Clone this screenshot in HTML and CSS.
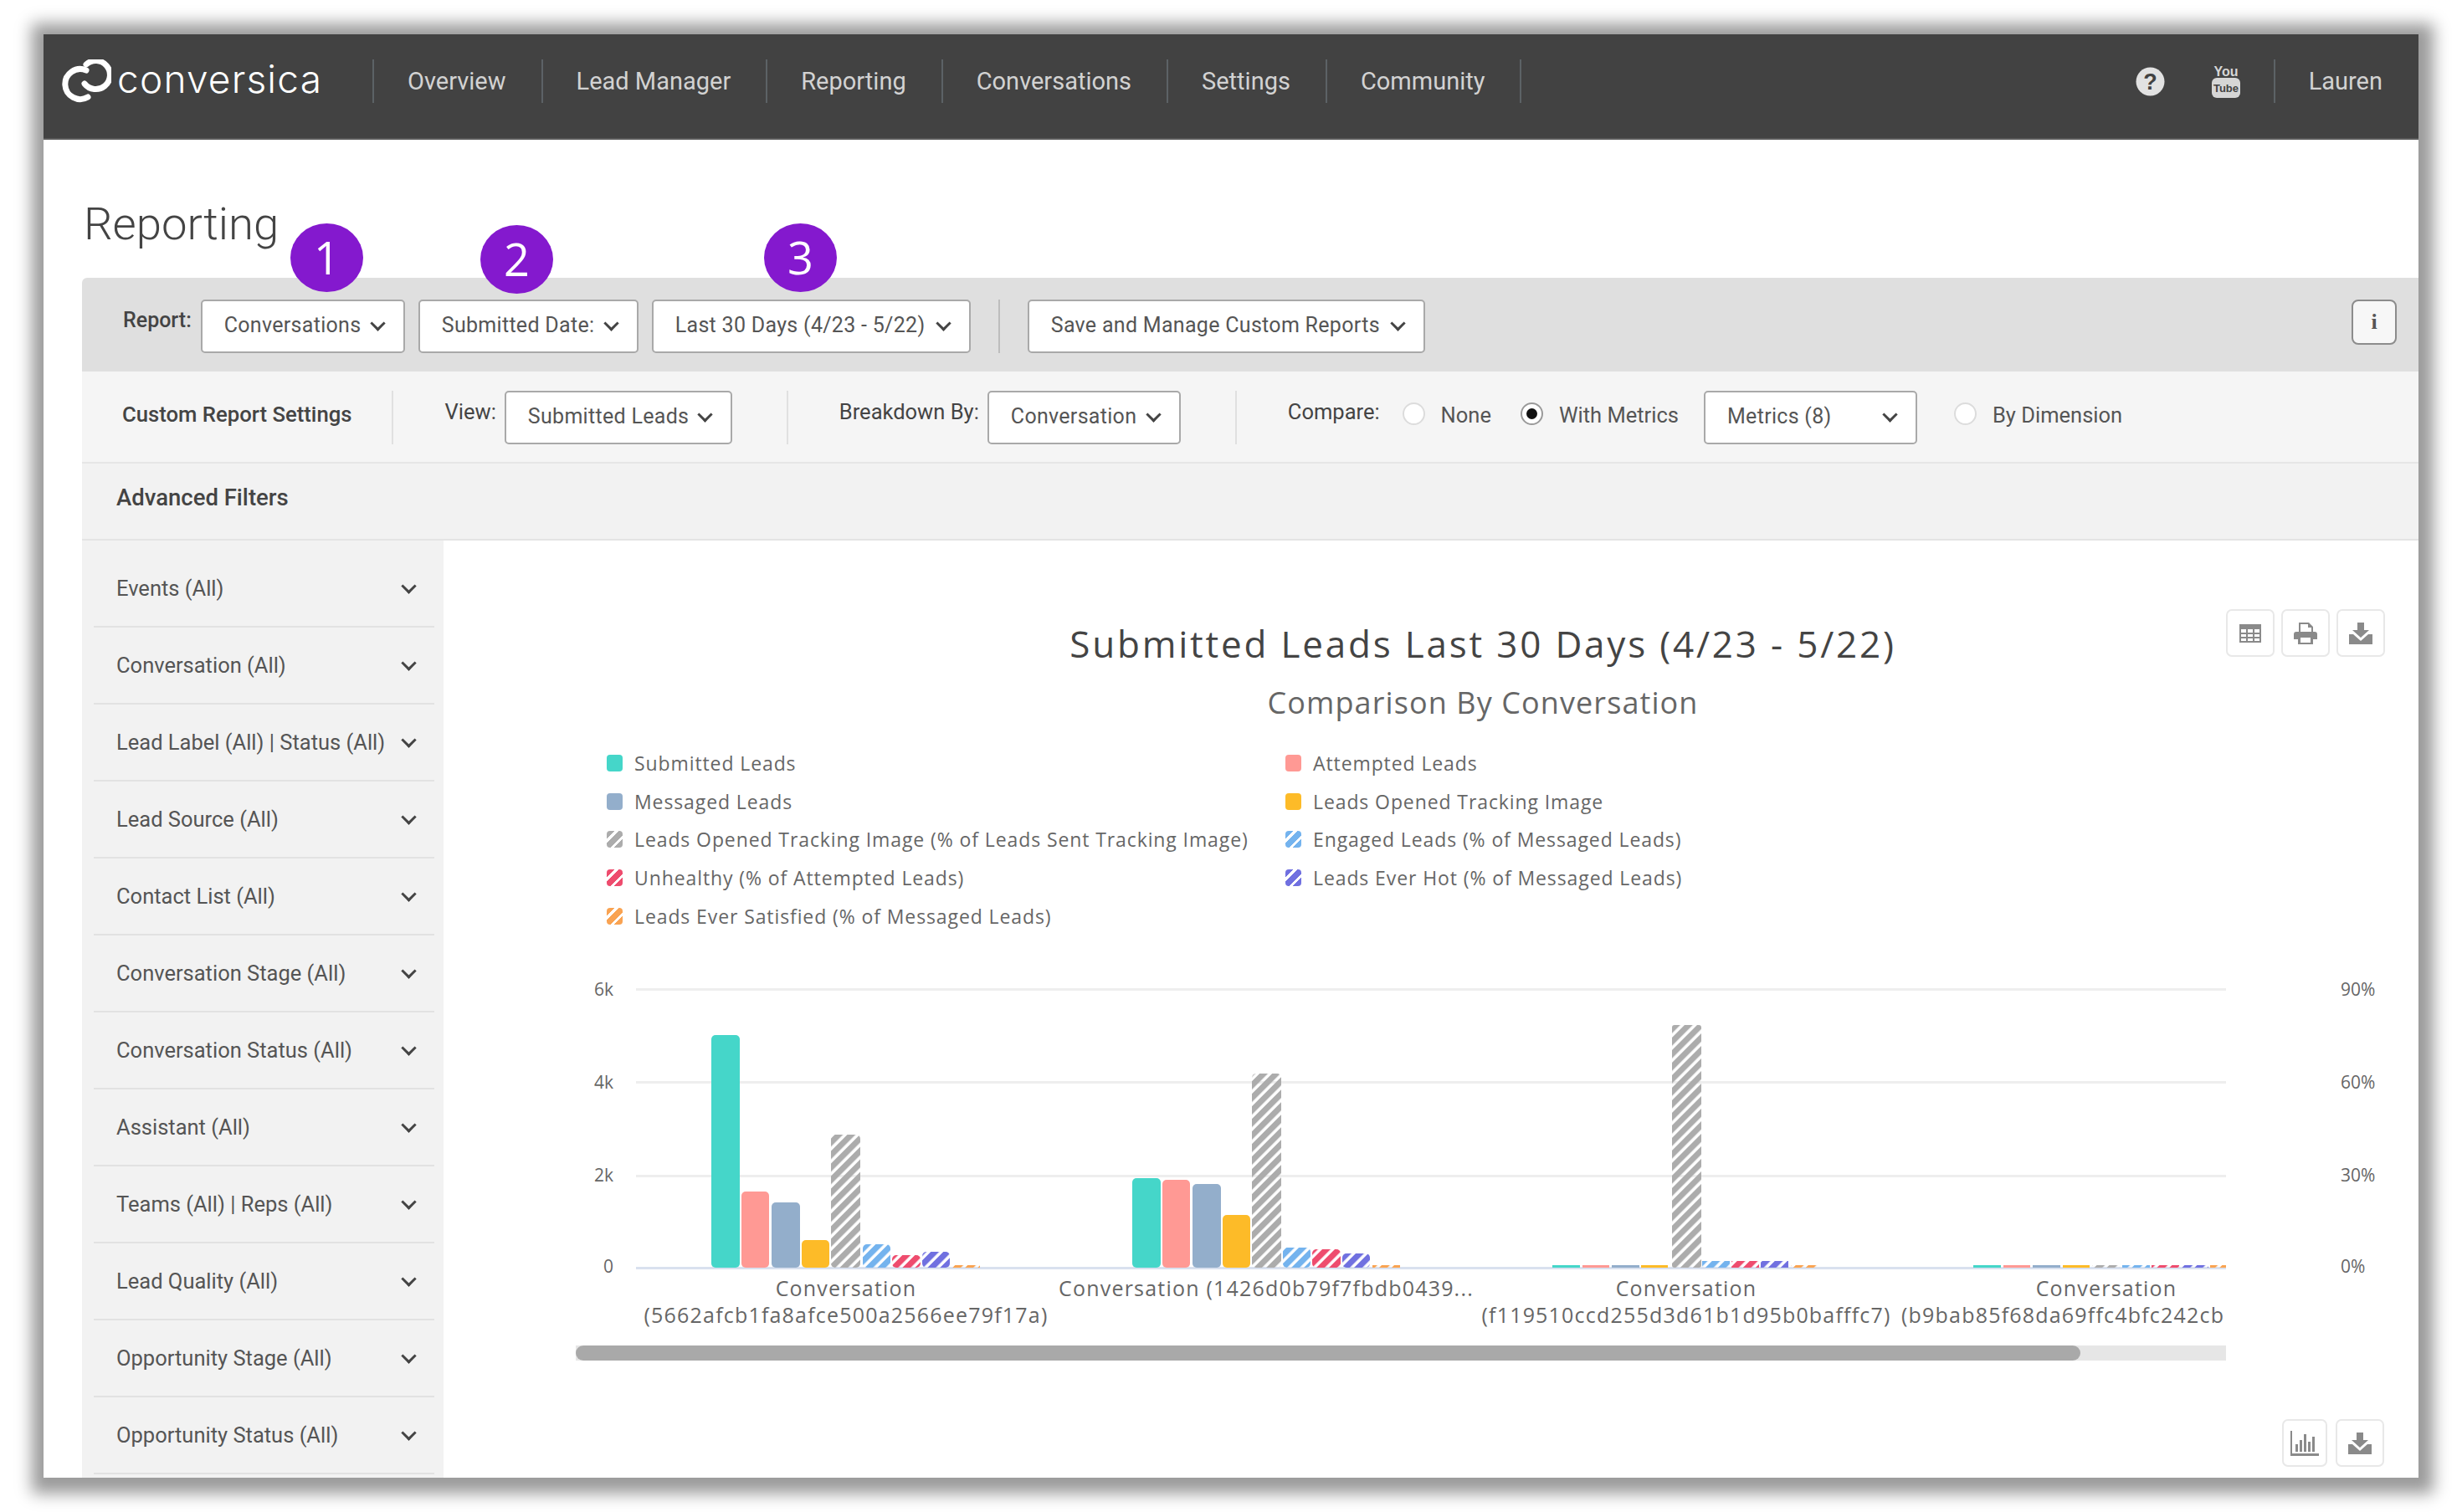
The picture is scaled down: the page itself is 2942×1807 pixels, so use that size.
FILE: index.html
```html
<!DOCTYPE html>
<html lang="en">
<head>
    <meta charset="UTF-8">
    <title>Conversica - Reporting</title>
    <link rel="stylesheet" href="styles.css">
</head>
<body>
<div class="frame">
    <nav class="topnav">
        <a class="logo">
            <svg width="60" height="52" viewBox="0 0 60 52" fill="none" stroke="#fff" stroke-width="7" stroke-linecap="round">
                <path d="M30 13A18 18 0 1 0 32 45"/>
                <path d="M30 6A17 17 0 1 1 28 29"/>
            </svg>
            <span class="logo-word">conversica</span>
        </a>
        <a class="nav-item">Overview</a>
        <a class="nav-item">Lead Manager</a>
        <a class="nav-item">Reporting</a>
        <a class="nav-item">Conversations</a>
        <a class="nav-item">Settings</a>
        <a class="nav-item nav-last">Community</a>
        <div class="nav-right">
            <svg class="icon-help" width="35" height="35" viewBox="0 0 35 35">
                <circle cx="17.5" cy="17.5" r="17" fill="#e2e2e2"/>
                <text x="17.5" y="27" text-anchor="middle">?</text>
            </svg>
            <svg class="icon-yt" width="34" height="40" viewBox="0 0 34 40">
                <text class="yt-you" x="17" y="14" text-anchor="middle">You</text>
                <rect y="16" width="34" height="24" rx="6" fill="#d6d6d6"/>
                <text class="yt-tube" x="17" y="33" text-anchor="middle">Tube</text>
            </svg>
            <a class="nav-user">Lauren</a>
        </div>
    </nav>

    <div class="content">
        <h1 class="page-title">Reporting</h1>

        <div class="toolbar">
            <span class="badge badge-1">1</span>
            <span class="badge badge-2">2</span>
            <span class="badge badge-3">3</span>
            <span class="label label-report">Report:</span>
            <button class="select sel-report">Conversations <i class="chev"></i></button>
            <button class="select sel-date">Submitted Date: <i class="chev"></i></button>
            <button class="select sel-range">Last 30 Days (4/23 - 5/22) <i class="chev"></i></button>
            <span class="divider divider-dark"></span>
            <button class="select sel-save">Save and Manage Custom Reports <i class="chev"></i></button>
            <button class="info-btn">i</button>
        </div>

        <div class="settings">
            <span class="label label-strong">Custom Report Settings</span>
            <span class="divider"></span>
            <span class="label label-view">View:</span>
            <button class="select sel-view">Submitted Leads <i class="chev"></i></button>
            <span class="divider"></span>
            <span class="label label-view">Breakdown By:</span>
            <button class="select sel-break">Conversation <i class="chev"></i></button>
            <span class="divider"></span>
            <span class="label">Compare:</span>
            <span class="radio"></span><span class="radio-text">None</span>
            <span class="radio radio-on"></span><span class="radio-text">With Metrics</span>
            <button class="select sel-metrics">Metrics (8) <i class="chev"></i></button>
            <span class="radio"></span><span class="radio-text">By Dimension</span>
        </div>

        <div class="adv-head">Advanced Filters</div>

        <div class="workspace">
            <aside class="filters">
                <div class="filter">Events (All)<i class="chev"></i></div>
                <div class="filter">Conversation (All)<i class="chev"></i></div>
                <div class="filter">Lead Label (All) | Status (All)<i class="chev"></i></div>
                <div class="filter">Lead Source (All)<i class="chev"></i></div>
                <div class="filter">Contact List (All)<i class="chev"></i></div>
                <div class="filter">Conversation Stage (All)<i class="chev"></i></div>
                <div class="filter">Conversation Status (All)<i class="chev"></i></div>
                <div class="filter">Assistant (All)<i class="chev"></i></div>
                <div class="filter">Teams (All) | Reps (All)<i class="chev"></i></div>
                <div class="filter">Lead Quality (All)<i class="chev"></i></div>
                <div class="filter">Opportunity Stage (All)<i class="chev"></i></div>
                <div class="filter">Opportunity Status (All)<i class="chev"></i></div>
            </aside>

            <section class="chart-panel">
                <div class="tools tools-top">
                    <button class="tool">
                        <svg width="26" height="24" viewBox="0 0 26 24" fill="#8a8a8a"><path d="M0 1h26v22H0zM2 7v4h6V7zm8 0v4h6V7zm8 0v4h6V7zM2 13v3h6v-3zm8 0v3h6v-3zm8 0v3h6v-3zM2 18v3h6v-3zm8 0v3h6v-3zm8 0v3h6v-3z" fill-rule="evenodd"/></svg>
                    </button>
                    <button class="tool">
                        <svg width="28" height="26" viewBox="0 0 28 26" fill="#8a8a8a"><path d="M6 0h12l5 5v6h2a3 3 0 0 1 3 3v6h-5v6H5v-6H0v-6a3 3 0 0 1 3-3h3zm2 2v9h13V6h-4V2zM8 18v6h12v-6z" fill-rule="evenodd"/></svg>
                    </button>
                    <button class="tool">
                        <svg width="28" height="26" viewBox="0 0 28 26" fill="#8a8a8a"><path d="M10 0h8v9h6l-10 9L4 9h6z"/><path d="M0 14h5l9 8 9-8h5v12H0z"/></svg>
                    </button>
                </div>

                <h2 class="chart-title">Submitted Leads Last 30 Days (4/23 - 5/22)</h2>
                <h3 class="chart-sub">Comparison By Conversation</h3>

                <div class="legend">
                    <div class="legend-item"><i class="mark m-teal"></i>Submitted Leads</div>
                    <div class="legend-item"><i class="mark m-salmon"></i>Attempted Leads</div>
                    <div class="legend-item"><i class="mark m-blue"></i>Messaged Leads</div>
                    <div class="legend-item"><i class="mark m-yellow"></i>Leads Opened Tracking Image</div>
                    <div class="legend-item"><i class="mark m-grey"></i>Leads Opened Tracking Image (% of Leads Sent Tracking Image)</div>
                    <div class="legend-item"><i class="mark m-sky"></i>Engaged Leads (% of Messaged Leads)</div>
                    <div class="legend-item"><i class="mark m-red"></i>Unhealthy (% of Attempted Leads)</div>
                    <div class="legend-item"><i class="mark m-violet"></i>Leads Ever Hot (% of Messaged Leads)</div>
                    <div class="legend-item"><i class="mark m-orange"></i>Leads Ever Satisfied (% of Messaged Leads)</div>
                </div>

                <svg class="plot" width="2230" height="480" viewBox="660 1160 2230 480">
                    <defs>
                        <pattern id="p-grey" width="10.6" height="10.6" patternUnits="userSpaceOnUse" patternTransform="rotate(45)"><rect width="7" height="10.6" fill="#acacac"/></pattern>
                        <pattern id="p-sky" width="10.6" height="10.6" patternUnits="userSpaceOnUse" patternTransform="rotate(45)"><rect width="7" height="10.6" fill="#74b3ee"/></pattern>
                        <pattern id="p-red" width="10.6" height="10.6" patternUnits="userSpaceOnUse" patternTransform="rotate(45)"><rect width="7" height="10.6" fill="#ee4c6e"/></pattern>
                        <pattern id="p-violet" width="10.6" height="10.6" patternUnits="userSpaceOnUse" patternTransform="rotate(45)"><rect width="7" height="10.6" fill="#7070e0"/></pattern>
                        <pattern id="p-orange" width="10.6" height="10.6" patternUnits="userSpaceOnUse" patternTransform="rotate(45)"><rect width="7" height="10.6" fill="#f9a352"/></pattern>
                    </defs>

                    <rect class="grid" x="760" y="1181" width="1900" height="3"/>
                    <rect class="grid" x="760" y="1292" width="1900" height="3"/>
                    <rect class="grid" x="760" y="1404" width="1900" height="3"/>
                    <rect class="base" x="760" y="1514" width="1900" height="3"/>

                    <text class="axis" x="733" y="1190" text-anchor="end">6k</text>
                    <text class="axis" x="733" y="1301" text-anchor="end">4k</text>
                    <text class="axis" x="733" y="1412" text-anchor="end">2k</text>
                    <text class="axis" x="733" y="1521" text-anchor="end">0</text>
                    <text class="axis" x="2797" y="1190">90%</text>
                    <text class="axis" x="2797" y="1301">60%</text>
                    <text class="axis" x="2797" y="1412">30%</text>
                    <text class="axis" x="2797" y="1521">0%</text>

                    <!-- first conversation -->
                    <rect x="850" y="1237" width="34" height="278" rx="5" fill="#45d6c9"/>
                    <rect x="886" y="1424" width="33" height="91" rx="5" fill="#ff9994"/>
                    <rect x="922" y="1437" width="34" height="78" rx="5" fill="#93aecb"/>
                    <rect x="958" y="1482" width="33" height="33" rx="5" fill="#fdbb28"/>
                    <rect x="993" y="1356" width="35" height="159" rx="5" fill="url(#p-grey)"/>
                    <rect x="1031" y="1487" width="33" height="28" rx="5" fill="url(#p-sky)"/>
                    <rect x="1066" y="1500" width="34" height="15" rx="5" fill="url(#p-red)"/>
                    <rect x="1102" y="1496" width="33" height="19" rx="5" fill="url(#p-violet)"/>
                    <rect x="1138" y="1512" width="33" height="3" fill="url(#p-orange)"/>

                    <!-- second conversation -->
                    <rect x="1353" y="1408" width="34" height="107" rx="5" fill="#45d6c9"/>
                    <rect x="1389" y="1410" width="33" height="105" rx="5" fill="#ff9994"/>
                    <rect x="1425" y="1415" width="34" height="100" rx="5" fill="#93aecb"/>
                    <rect x="1461" y="1452" width="33" height="63" rx="5" fill="#fdbb28"/>
                    <rect x="1496" y="1283" width="35" height="232" rx="5" fill="url(#p-grey)"/>
                    <rect x="1533" y="1491" width="33" height="24" rx="5" fill="url(#p-sky)"/>
                    <rect x="1568" y="1493" width="34" height="22" rx="5" fill="url(#p-red)"/>
                    <rect x="1604" y="1498" width="33" height="17" rx="5" fill="url(#p-violet)"/>
                    <rect x="1640" y="1512" width="33" height="3" fill="url(#p-orange)"/>

                    <!-- third conversation -->
                    <rect x="1855" y="1512" width="33" height="3" fill="#45d6c9"/>
                    <rect x="1891" y="1512" width="32" height="3" fill="#ff9994"/>
                    <rect x="1926" y="1512" width="33" height="3" fill="#93aecb"/>
                    <rect x="1961" y="1512" width="32" height="3" fill="#fdbb28"/>
                    <rect x="1998" y="1225" width="35" height="290" rx="3" fill="url(#p-grey)"/>
                    <rect x="2034" y="1507" width="33" height="8" fill="url(#p-sky)"/>
                    <rect x="2069" y="1507" width="33" height="8" fill="url(#p-red)"/>
                    <rect x="2104" y="1507" width="33" height="8" fill="url(#p-violet)"/>
                    <rect x="2140" y="1512" width="33" height="3" fill="url(#p-orange)"/>

                    <!-- fourth conversation -->
                    <rect x="2358" y="1512" width="33" height="3" fill="#45d6c9"/>
                    <rect x="2394" y="1512" width="32" height="3" fill="#ff9994"/>
                    <rect x="2429" y="1512" width="33" height="3" fill="#93aecb"/>
                    <rect x="2465" y="1512" width="32" height="3" fill="#fdbb28"/>
                    <rect x="2500" y="1512" width="33" height="3" fill="url(#p-grey)"/>
                    <rect x="2536" y="1512" width="33" height="3" fill="url(#p-sky)"/>
                    <rect x="2571" y="1512" width="33" height="3" fill="url(#p-red)"/>
                    <rect x="2606" y="1512" width="33" height="3" fill="url(#p-violet)"/>
                    <rect x="2641" y="1512" width="19" height="3" fill="url(#p-orange)"/>

                    <text class="cat" x="1011" y="1549" text-anchor="middle">Conversation</text>
                    <text class="cat" x="1011" y="1581" text-anchor="middle">(5662afcb1fa8afce500a2566ee79f17a)</text>
                    <text class="cat" x="1513" y="1549" text-anchor="middle">Conversation (1426d0b79f7fbdb0439...</text>
                    <text class="cat" x="2015" y="1549" text-anchor="middle">Conversation</text>
                    <text class="cat" x="2015" y="1581" text-anchor="middle">(f119510ccd255d3d61b1d95b0bafffc7)</text>
                    <text class="cat" x="2517" y="1549" text-anchor="middle">Conversation</text>
                    <text class="cat" x="2272" y="1581">(b9bab85f68da69ffc4bfc242cb</text>

                    <rect class="scroll-track" x="688" y="1608" width="1972" height="18"/>
                    <rect class="scroll-thumb" x="688" y="1608" width="1798" height="18" rx="9"/>
                </svg>

                <div class="tools tools-bottom">
                    <button class="tool tool-narrow">
                        <svg width="34" height="30" viewBox="0 0 34 30" fill="#8a8a8a"><path d="M0 0h2v27h32v3H0zM6 16h3v9H6zM11 11h3v14h-3zM16 4h3v21h-3zM21 13h3v12h-3zM26 7h3v18h-3z"/></svg>
                    </button>
                    <button class="tool">
                        <svg width="28" height="26" viewBox="0 0 28 26" fill="#8a8a8a"><path d="M10 0h8v9h6l-10 9L4 9h6z"/><path d="M0 14h5l9 8 9-8h5v12H0z"/></svg>
                    </button>
                </div>
            </section>
        </div>
    </div>
</div>
</body>
</html>
```

FILE: styles.css
```css
html, body {
    margin: 0;
    height: 100%;
    background: #fff;
    overflow: hidden;
}
body {
    padding: 41px 52px 0;
    box-sizing: border-box;
    font-family: Roboto, "Liberation Sans", sans-serif;
    color: #555;
}
.frame {
    height: 1725px;
    background: #fff;
    overflow: hidden;
    box-shadow: 2px 3px 18px 16px #9b9b9b;
}

/* top bar */
.topnav {
    height: 126px;
    box-sizing: border-box;
    padding: 30px 43px 0 21px;
    background: #424242;
    border-bottom: 2px solid #5a5a5a;
    display: flex;
    align-items: flex-start;
}
.logo {
    width: 372px;
    height: 52px;
    display: flex;
    align-items: center;
    gap: 7px;
}
.logo-word {
    font-family: Inter, sans-serif;
    font-weight: 300;
    font-size: 46px;
    letter-spacing: 1.2px;
    color: #fff;
    line-height: 52px;
    margin-top: -6px;
}
.nav-item {
    height: 52px;
    line-height: 52px;
    padding: 0 42px 0 40px;
    border-left: 2px solid #5c6266;
    font-size: 29px;
    color: #d2d2d2;
}
.nav-last {
    border-right: 2px solid #5c6266;
}
.nav-right {
    margin-left: auto;
    height: 52px;
    display: flex;
    align-items: center;
}
.icon-help text {
    font-family: "Liberation Sans", sans-serif;
    font-weight: bold;
    font-size: 27px;
    fill: #424242;
}
.icon-help {
    margin-right: 56px;
}
.icon-yt {
    margin-right: 40px;
}
.yt-you {
    font-family: "Liberation Sans", sans-serif;
    font-weight: bold;
    font-size: 16px;
    fill: #d6d6d6;
}
.yt-tube {
    font-family: "Liberation Sans", sans-serif;
    font-weight: bold;
    font-size: 13px;
    fill: #424242;
}
.nav-user {
    height: 52px;
    line-height: 52px;
    padding-left: 40px;
    border-left: 2px solid #5c6266;
    font-size: 29px;
    color: #d2d2d2;
}

.content {
    padding-left: 46px;
}
.page-title {
    margin: 0;
    height: 165px;
    box-sizing: border-box;
    padding: 68px 0 0 2px;
    font-size: 54.5px;
    line-height: 64px;
    font-weight: 300;
    color: #444;
}

/* report selectors */
.toolbar {
    position: relative;
    height: 112px;
    box-sizing: border-box;
    padding: 26px 26px 0 49px;
    background: #dfdfdf;
    border-top-left-radius: 6px;
    display: flex;
    align-items: flex-start;
}
.badge {
    position: absolute;
    top: -65px;
    width: 87px;
    height: 82px;
    border-radius: 50%;
    background: #8419ce;
    color: #fff;
    font-family: "Open Sans", sans-serif;
    font-size: 54px;
    line-height: 80px;
    text-align: center;
}
.badge-1 { left: 249px; }
.badge-2 { left: 476px; top: -63px; }
.badge-3 { left: 815px; }

.label {
    font-size: 25.5px;
    line-height: 50px;
    color: #444;
    white-space: nowrap;
}
.label-report {
    font-size: 25px;
    font-weight: 500;
    margin-right: 11px;
}
.label-strong {
    font-size: 25.7px;
    font-weight: 500;
    line-height: 56px;
}
.label-view {
    margin-right: 10px;
}
.select {
    height: 64px;
    padding: 0 21px 3px 26px;
    background: #fff;
    border: 2px solid #a9a9a9;
    border-radius: 5px;
    font-family: Roboto, "Liberation Sans", sans-serif;
    font-size: 25px;
    letter-spacing: 0.3px;
    color: #555;
    white-space: nowrap;
    display: flex;
    align-items: center;
    justify-content: space-between;
    flex: none;
}
.sel-report { width: 244px; margin-right: 16px; }
.sel-date { width: 263px; margin-right: 16px; }
.sel-range { width: 381px; }
.sel-save { width: 475px; }
.sel-view { width: 272px; }
.sel-break { width: 231px; }
.sel-metrics {
    width: 255px;
    margin-left: 30px;
    margin-right: 44px;
}
.chev {
    flex: none;
    width: 10px;
    height: 10px;
    margin: -5px 3px 0 3px;
    border-right: 3px solid #444;
    border-bottom: 3px solid #444;
    transform: rotate(45deg);
}
.divider {
    flex: none;
    width: 2px;
    height: 64px;
    margin: 0 64px;
    background: #e0e0e0;
}
.divider-dark {
    margin: 0 33px;
    background: #bdbdbd;
}
.info-btn {
    margin-left: auto;
    width: 54px;
    height: 54px;
    padding: 0;
    background: #f7f7f7;
    border: 2px solid #8c8c8c;
    border-radius: 8px;
    font-family: "Liberation Serif", serif;
    font-weight: bold;
    font-size: 26px;
    color: #555;
}

/* custom report row */
.settings {
    height: 110px;
    box-sizing: border-box;
    padding: 23px 0 0 48px;
    background: #f5f5f5;
    border-bottom: 2px solid #e6e6e6;
    display: flex;
    align-items: flex-start;
}
.settings .divider {
    margin: 0 62px 0 47px;
}
.settings .select ~ .divider {
    margin: 0 61px 0 65px;
}
.radio {
    flex: none;
    width: 27px;
    height: 27px;
    box-sizing: border-box;
    margin: 14px 0 0 27px;
    background: #fff;
    border: 2px solid #dcdcdc;
    border-radius: 50%;
    display: flex;
    align-items: center;
    justify-content: center;
}
.radio-on {
    border-color: #9a9a9a;
    margin-left: 35px;
}
.radio-on::after {
    content: "";
    width: 13px;
    height: 13px;
    border-radius: 50%;
    background: #111;
}
.radio-text {
    margin-left: 19px;
    font-size: 25.5px;
    line-height: 58px;
    white-space: nowrap;
}
.sel-metrics + .radio {
    margin-left: 0;
}

.adv-head {
    height: 92px;
    box-sizing: border-box;
    padding-left: 41px;
    background: #f2f2f2;
    border-bottom: 2px solid #e4e4e4;
    font-size: 27.5px;
    font-weight: 500;
    line-height: 82px;
    color: #444;
}

.workspace {
    display: flex;
}

/* filter list */
.filters {
    flex: none;
    width: 432px;
    box-sizing: border-box;
    padding: 12px 11px 0 14px;
    background: #f2f2f2;
    height: 1120px;
}
.filter {
    height: 92px;
    box-sizing: border-box;
    padding: 0 21px 0 27px;
    border-bottom: 2px solid #e2e2e2;
    font-size: 25.5px;
    display: flex;
    align-items: center;
    justify-content: space-between;
    white-space: nowrap;
}

/* chart */
.chart-panel {
    flex: 1;
    position: relative;
    box-sizing: border-box;
    padding: 93px 0 0 124px;
}
.chart-title {
    margin: 0;
    font-family: "Open Sans", sans-serif;
    font-weight: 400;
    font-size: 44px;
    letter-spacing: 2.8px;
    line-height: 60px;
    text-align: center;
    color: #444;
}
.chart-sub {
    margin: 16px 0 0;
    font-family: "Open Sans", sans-serif;
    font-weight: 400;
    font-size: 36px;
    letter-spacing: 1.1px;
    line-height: 50px;
    text-align: center;
    color: #666;
}
.legend {
    margin: 24px 0 0 71px;
    display: grid;
    grid-template-columns: 811px 1fr;
    grid-auto-rows: 45.75px;
    font-family: "Open Sans", sans-serif;
    font-size: 23px;
    letter-spacing: 0.9px;
    color: #666;
}
.legend-item {
    display: flex;
    align-items: center;
    gap: 14px;
    white-space: nowrap;
}
.mark {
    flex: none;
    width: 19px;
    height: 20px;
    border-radius: 4px;
}
.m-teal { background: #45d6c9; }
.m-salmon { background: #ff9994; }
.m-blue { background: #93aecb; }
.m-yellow { background: #fdbb28; }
.m-grey { background: repeating-linear-gradient(135deg, #acacac 0 7px, #fff 7px 10px); }
.m-sky { background: repeating-linear-gradient(135deg, #74b3ee 0 7px, #fff 7px 10px); }
.m-red { background: repeating-linear-gradient(135deg, #ee4c6e 0 7px, #fff 7px 10px); }
.m-violet { background: repeating-linear-gradient(135deg, #7070e0 0 7px, #fff 7px 10px); }
.m-orange { background: repeating-linear-gradient(135deg, #f9a352 0 7px, #fff 7px 10px); }

.plot {
    display: block;
    margin: 42px 0 0 6px;
}
.grid { fill: #eeeeee; }
.base { fill: #d9e1ef; }
.axis {
    font-family: "Open Sans", sans-serif;
    font-size: 21px;
    fill: #666;
}
.cat {
    font-family: "Open Sans", sans-serif;
    font-size: 25px;
    letter-spacing: 1.2px;
    fill: #666;
}
.scroll-track { fill: #e6e6e6; }
.scroll-thumb { fill: #a9a9a9; }

.tools {
    position: absolute;
    right: 40px;
    display: flex;
    gap: 8px;
}
.tools-top { top: 82px; }
.tools-bottom { bottom: 13px; gap: 10px; right: 41px; }
.tool {
    width: 58px;
    height: 57px;
    padding: 0;
    background: #fff;
    border: 2px solid #e8e8e8;
    border-radius: 7px;
    display: flex;
    align-items: center;
    justify-content: center;
}
.tool-narrow {
    width: 54px;
}
```
